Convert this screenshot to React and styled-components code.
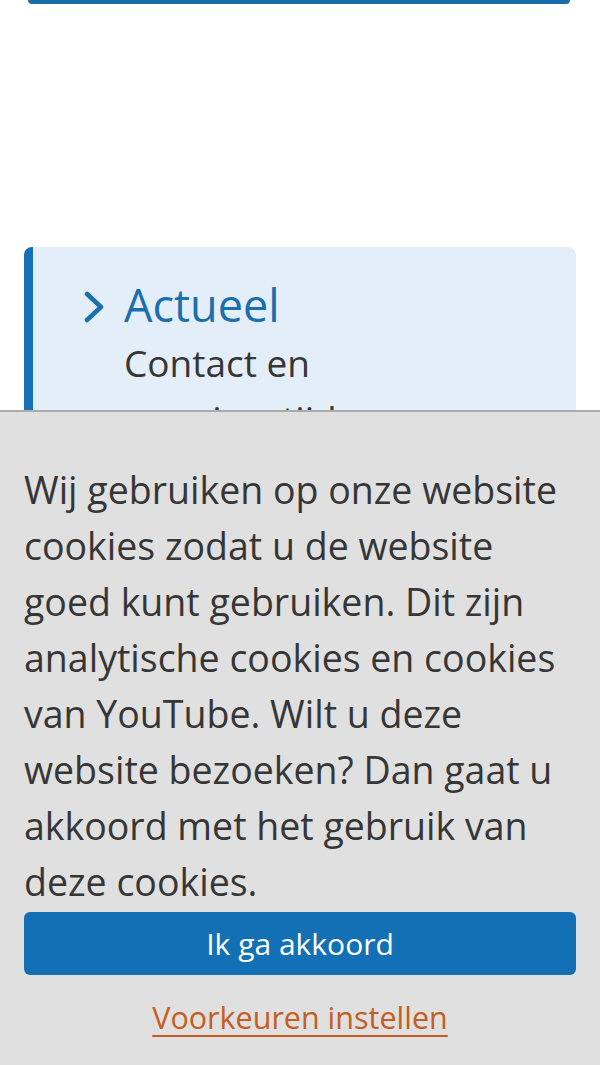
import React from "react";
import styled, { createGlobalStyle } from "styled-components";

const GlobalStyle = createGlobalStyle`
  body {
    margin: 0;
    background: #ffffff;
    font-family: "Open Sans", "Noto Sans", sans-serif;
    color: #333333;
  }
`;

const Page = styled.div`
  padding: 0 24px;
`;

const ButtonEdge = styled.div`
  height: 4px;
  margin: 0 6px 0 4px;
  background: #1a6dab;
  border-radius: 0 0 6px 6px;
`;

const Card = styled.div`
  margin-top: 243px;
  display: grid;
  grid-template-columns: 22px 1fr;
  column-gap: 18px;
  padding: 31px 24px 40px 51px;
  background: #e4eef8;
  border-left: 9px solid #1570b5;
  border-radius: 8px;
`;

const Chevron = styled.svg`
  align-self: center;
  margin-top: 3px;
`;

const CardTitle = styled.h2`
  margin: 0;
  font-size: 45px;
  line-height: 54px;
  font-weight: 400;
  color: #1a6fae;
`;

const CardText = styled.p`
  grid-column: 2;
  margin: 3px 0 0;
  font-size: 37px;
  line-height: 56px;
  color: #363636;
`;

const Banner = styled.div`
  position: fixed;
  left: 0;
  right: 0;
  bottom: 0;
  display: flex;
  flex-direction: column;
  padding: 50px 24px 25px;
  background: #e0e0e0;
  border-top: 2px solid #ababab;
`;

const BannerText = styled.p`
  margin: 0 0 2px;
  font-size: 37.5px;
  line-height: 56px;
  color: #363636;
`;

const AcceptButton = styled.button`
  height: 63px;
  border: 0;
  border-radius: 6px;
  background: #1370b5;
  color: #ffffff;
  font-family: inherit;
  font-size: 30px;
  cursor: pointer;
`;

const PrefLink = styled.a`
  align-self: center;
  margin-top: 19px;
  font-size: 30.5px;
  line-height: 46px;
  color: #c65d21;
  text-decoration: underline;
  text-decoration-thickness: 2px;
  text-underline-offset: 6px;
`;

export default function App() {
  return (
    <>
      <GlobalStyle />
      <Page>
        <ButtonEdge />
        <Card>
          <Chevron width="22" height="34" viewBox="0 0 22 34">
            <polyline
              points="3,4 17,17 3,30"
              fill="none"
              stroke="#1a6fae"
              strokeWidth="4.5"
              strokeLinecap="round"
              strokeLinejoin="round"
            />
          </Chevron>
          <CardTitle>Actueel</CardTitle>
          <CardText>Contact en openingstijden</CardText>
        </Card>
      </Page>
      <Banner>
        <BannerText>
          Wij gebruiken op onze website cookies zodat u de website goed kunt
          gebruiken. Dit zijn analytische cookies en cookies van YouTube. Wilt
          u deze website bezoeken? Dan gaat u akkoord met het gebruik van deze
          cookies.
        </BannerText>
        <AcceptButton>Ik ga akkoord</AcceptButton>
        <PrefLink href="#">Voorkeuren instellen</PrefLink>
      </Banner>
    </>
  );
}
